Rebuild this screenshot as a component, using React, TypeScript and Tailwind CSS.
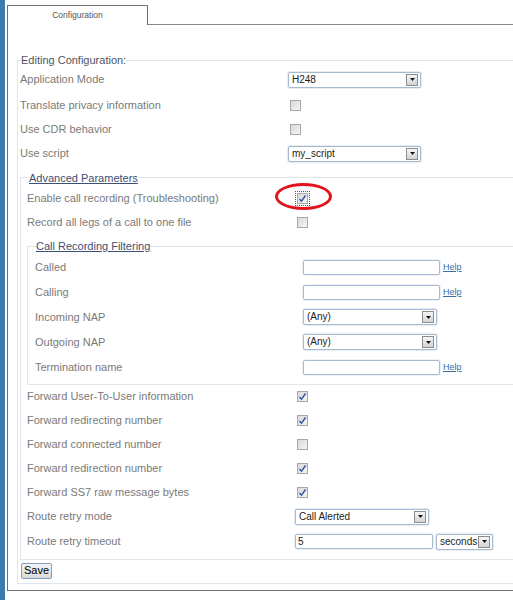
import type { ReactNode } from "react";

const font = "font-['Liberation_Sans',Arial,sans-serif]";

function Checkbox({ checked = false, focused = false }: { checked?: boolean; focused?: boolean }) {
  return (
    <div
      className={`relative flex h-[11px] w-[11px] items-center justify-center border border-[#a8a8a8] bg-[linear-gradient(135deg,#d8d8d8_0%,#f5f5f5_100%)] ${
        focused ? "outline outline-1 outline-dotted outline-offset-[1px] outline-[#555]" : ""
      }`}
    >
      {checked ? (
        <svg width="9" height="9" viewBox="0 0 9 9">
          <path d="M1.5 5 L3.5 7.2 L7.5 1.5" fill="none" stroke="#3350a8" strokeWidth="1.4" />
        </svg>
      ) : null}
    </div>
  );
}

function Select({ value, width }: { value: string; width: number }) {
  return (
    <div
      className="flex h-[16px] items-center justify-between rounded-[2px] border border-[#a6bad0] bg-white pl-[3px] pr-[2px] shadow-[0_0_0_1px_#e6edf4]"
      style={{ width }}
    >
      <span className="text-[10px] leading-none text-[#222]">{value}</span>
      <div className="flex h-[12px] w-[12px] items-center justify-center border border-[#8c8c8c] bg-[linear-gradient(180deg,#f6f6f6_0%,#d4d4d4_100%)]">
        <svg width="5" height="3" viewBox="0 0 5 3">
          <path d="M0 0 H5 L2.5 3 Z" fill="#111" />
        </svg>
      </div>
    </div>
  );
}

function Input({ value = "", width = 137 }: { value?: string; width?: number }) {
  return (
    <div
      className="flex h-[15px] items-center rounded-[2px] border border-[#a6bad0] bg-white pl-[2px] text-[10px] leading-none text-[#222] shadow-[0_0_0_1px_#eef2f6]"
      style={{ width }}
    >
      {value}
    </div>
  );
}

function Help() {
  return <span className="ml-[3px] text-[9px] leading-none text-[#3a6ea5] underline">Help</span>;
}

function Row({ label, h = 24, children }: { label: string; h?: number; children?: ReactNode }) {
  return (
    <div className="grid grid-cols-[268px_1fr] items-center" style={{ height: h }}>
      <span className="text-[11px] leading-none text-[#7a7a7a]">{label}</span>
      <div className="flex items-center">{children}</div>
    </div>
  );
}

export default function App() {
  return (
    <div className={`flex h-[600px] w-[513px] overflow-hidden bg-white ${font}`}>
      <div className="h-full w-[5px] shrink-0 bg-[#3b7cae]" />
      <div className="ml-[2px] w-[600px] shrink-0 pt-[5px]">
        <div className="flex">
          <div className="flex h-[20px] w-[141px] items-center justify-center border border-b-0 border-[#707070] text-[8.5px] text-[#555]">
            Configuration
          </div>
          <div className="flex-1 border-b border-[#858585]" />
        </div>

        <div className="h-[566px] border-b border-l border-[#707070] pl-[9px] pt-[27px]">
          <fieldset className="border border-[#dfe6ec] pb-[4px] pl-[2px]">
            <legend className="ml-px text-[11px] text-[#50555e]">Editing Configuration:</legend>
            <div className="-mt-[3px]">
              <Row label="Application Mode" h={28}>
                <Select value="H248" width={133} />
              </Row>
              <Row label="Translate privacy information">
                <div className="ml-[2px]">
                  <Checkbox />
                </div>
              </Row>
              <Row label="Use CDR behavior">
                <div className="ml-[2px]">
                  <Checkbox />
                </div>
              </Row>
              <Row label="Use script">
                <Select value="my_script" width={133} />
              </Row>
            </div>

            <fieldset className="mt-[4px] border border-[#dfe6ec] pb-[4px] pl-[6px]">
              <legend className="ml-[2px] text-[11px] text-[#3c4f75] underline">Advanced Parameters</legend>
              <Row label="Enable call recording (Troubleshooting)">
                <div className="relative ml-[2px]">
                  <Checkbox checked focused />
                  <div className="absolute left-[-22px] top-[-10px] h-[27px] w-[57px] rounded-[50%] border-[3px] border-[#e3121b]" />
                </div>
              </Row>
              <Row label="Record all legs of a call to one file">
                <div className="ml-[2px]">
                  <Checkbox />
                </div>
              </Row>

              <fieldset className="mt-[4px] ml-0 border border-[#dfe6ec] pb-[4px] pl-[7px]">
                <legend className="ml-px text-[11px] text-[#3c4f75] underline">Call Recording Filtering</legend>
                <Row label="Called" h={25}>
                  <Input />
                  <Help />
                </Row>
                <Row label="Calling" h={25}>
                  <Input />
                  <Help />
                </Row>
                <Row label="Incoming NAP" h={25}>
                  <Select value="(Any)" width={134} />
                </Row>
                <Row label="Outgoing NAP" h={25}>
                  <Select value="(Any)" width={134} />
                </Row>
                <Row label="Termination name" h={25}>
                  <Input />
                  <Help />
                </Row>
              </fieldset>

              <div>
                {[
                  ["Forward User-To-User information", true],
                  ["Forward redirecting number", true],
                  ["Forward connected number", false],
                  ["Forward redirection number", true],
                  ["Forward SS7 raw message bytes", true],
                ].map(([label, checked]) => (
                  <Row key={label as string} label={label as string}>
                    <div className="ml-[2px]">
                      <Checkbox checked={checked as boolean} />
                    </div>
                  </Row>
                ))}
                <Row label="Route retry mode">
                  <Select value="Call Alerted" width={134} />
                </Row>
                <Row label="Route retry timeout" h={26}>
                  <Input value="5" width={138} />
                  <div className="ml-[3px]">
                    <Select value="seconds" width={57} />
                  </div>
                </Row>
              </div>
            </fieldset>

            <button className="mt-[3px] ml-px flex h-[16px] w-[31px] items-center justify-center rounded-[2px] border border-[#7d9ec2] bg-[linear-gradient(180deg,#f4f4f4_0%,#d9d9d9_100%)] text-[11px] leading-none text-black">
              Save
            </button>
          </fieldset>
        </div>
      </div>
    </div>
  );
}
